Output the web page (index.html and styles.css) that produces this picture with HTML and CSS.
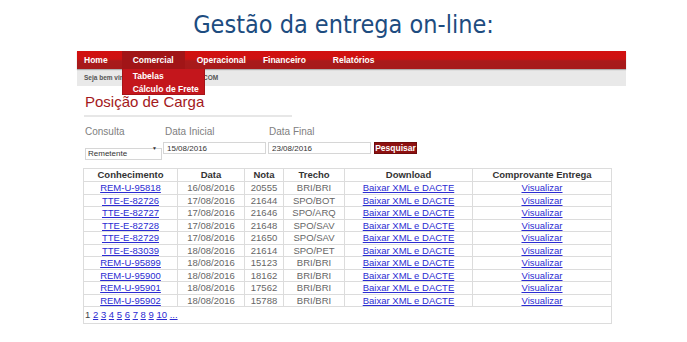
FILE: index.html
```html
<!DOCTYPE html>
<html lang="pt-BR">
<head>
<meta charset="utf-8">
<title>Gestão da entrega on-line</title>
<link rel="stylesheet" href="styles.css">
</head>
<body>
<h1 class="title">Gestão da entrega on-line:</h1>
<div class="portal">
  <nav class="menu">
    <ul class="menu-list">
      <li class="menu-item menu-first">Home</li>
      <li class="menu-item menu-active">Comercial
        <ul class="dropdown">
          <li class="dropdown-item">Tabelas</li>
          <li class="dropdown-item">Cálculo de Frete</li>
        </ul>
      </li>
      <li class="menu-item menu-op">Operacional</li>
      <li class="menu-item menu-fin">Financeiro</li>
      <li class="menu-item">Relatórios</li>
    </ul>
  </nav>
  <div class="welcome">Seja bem vindo, CLIENTE@EXEMPLO.COM</div>
  <main class="content">
    <h2 class="page-title">Posição de Carga</h2>
    <form class="search">
      <label class="lbl lbl-first">Consulta</label>
      <label class="lbl">Data Inicial</label>
      <label class="lbl lbl-last">Data Final</label>
      <span></span>
      <span class="select-wrap"><select class="field select"><option>Remetente</option></select></span>
      <input class="field date" type="text" value="15/08/2016">
      <input class="field date" type="text" value="23/08/2016">
      <button class="btn" type="button">Pesquisar</button>
    </form>
    <table class="grid">
      <colgroup>
        <col class="c1"><col class="c2"><col class="c3"><col class="c4"><col class="c5"><col class="c6">
      </colgroup>
      <thead>
        <tr><th>Conhecimento</th><th>Data</th><th>Nota</th><th>Trecho</th><th>Download</th><th>Comprovante Entrega</th></tr>
      </thead>
      <tbody>
        <tr><td><a href="#">REM-U-95818</a></td><td>16/08/2016</td><td>20555</td><td>BRI/BRI</td><td><a href="#">Baixar XML e DACTE</a></td><td><a href="#">Visualizar</a></td></tr>
        <tr><td><a href="#">TTE-E-82726</a></td><td>17/08/2016</td><td>21644</td><td>SPO/BOT</td><td><a href="#">Baixar XML e DACTE</a></td><td><a href="#">Visualizar</a></td></tr>
        <tr><td><a href="#">TTE-E-82727</a></td><td>17/08/2016</td><td>21646</td><td>SPO/ARQ</td><td><a href="#">Baixar XML e DACTE</a></td><td><a href="#">Visualizar</a></td></tr>
        <tr><td><a href="#">TTE-E-82728</a></td><td>17/08/2016</td><td>21648</td><td>SPO/SAV</td><td><a href="#">Baixar XML e DACTE</a></td><td><a href="#">Visualizar</a></td></tr>
        <tr><td><a href="#">TTE-E-82729</a></td><td>17/08/2016</td><td>21650</td><td>SPO/SAV</td><td><a href="#">Baixar XML e DACTE</a></td><td><a href="#">Visualizar</a></td></tr>
        <tr><td><a href="#">TTE-E-83039</a></td><td>18/08/2016</td><td>21614</td><td>SPO/PET</td><td><a href="#">Baixar XML e DACTE</a></td><td><a href="#">Visualizar</a></td></tr>
        <tr><td><a href="#">REM-U-95899</a></td><td>18/08/2016</td><td>15123</td><td>BRI/BRI</td><td><a href="#">Baixar XML e DACTE</a></td><td><a href="#">Visualizar</a></td></tr>
        <tr><td><a href="#">REM-U-95900</a></td><td>18/08/2016</td><td>18162</td><td>BRI/BRI</td><td><a href="#">Baixar XML e DACTE</a></td><td><a href="#">Visualizar</a></td></tr>
        <tr><td><a href="#">REM-U-95901</a></td><td>18/08/2016</td><td>17562</td><td>BRI/BRI</td><td><a href="#">Baixar XML e DACTE</a></td><td><a href="#">Visualizar</a></td></tr>
        <tr><td><a href="#">REM-U-95902</a></td><td>18/08/2016</td><td>15788</td><td>BRI/BRI</td><td><a href="#">Baixar XML e DACTE</a></td><td><a href="#">Visualizar</a></td></tr>
      </tbody>
      <tfoot>
        <tr><td colspan="6" class="pager">1 <a href="#">2</a> <a href="#">3</a> <a href="#">4</a> <a href="#">5</a> <a href="#">6</a> <a href="#">7</a> <a href="#">8</a> <a href="#">9</a> <a href="#">10</a> <a href="#">...</a></td></tr>
      </tfoot>
    </table>
  </main>
</div>
</body>
</html>
```

FILE: styles.css
```css
* { box-sizing: border-box; }
html, body { margin: 0; padding: 0; background: #fff; }
body { width: 687px; height: 342px; overflow: hidden; font-family: "Liberation Sans", Arial, sans-serif; }

.title {
  margin: 0;
  height: 51px;
  line-height: 50px;
  text-align: center;
  font-family: "DejaVu Sans", "Liberation Sans", sans-serif;
  font-stretch: condensed;
  font-weight: 400;
  font-size: 25px;
  color: #1d4c80;
}

.portal { margin-left: 77px; width: 549px; }

.menu {
  height: 18px;
  background: linear-gradient(#d3100f 0%, #cc1212 45%, #a91a1b 55%, #a61a1b 100%);
  box-shadow: 0 1px 1px rgba(0,0,0,0.25);
  position: relative;
  z-index: 2;
}
.menu-list { list-style: none; margin: 0; padding: 0; display: flex; height: 18px; }
.menu-item {
  position: relative;
  padding: 0 12px;
  line-height: 18px;
  font-size: 8.5px;
  font-weight: bold;
  color: #fff;
}
.menu-first { padding-left: 7px; padding-right: 14px; }
.menu-active { padding-left: 11px; padding-right: 11px; background: #a11517; }
.menu-op { padding-left: 12px; padding-right: 3px; }
.menu-fin { padding-left: 14px; padding-right: 15px; }

.dropdown {
  position: absolute;
  left: 0;
  top: 18px;
  width: 83px;
  list-style: none;
  margin: 0;
  padding: 1px 0 0;
  height: 26px;
  background: #c4161c;
  border: 1px solid #a51418;
  border-top: 0;
}
.dropdown-item { padding-left: 10px; line-height: 12.5px; white-space: nowrap; }

.welcome {
  height: 17px;
  line-height: 17px;
  background: #e9e9e9;
  padding-left: 7px;
  font-size: 6.5px;
  font-weight: bold;
  color: #555;
  white-space: nowrap;
}

.content { padding-left: 8px; }

.page-title {
  margin: 7px 0 0 -1px;
  width: 208px;
  padding: 0 0 4px 1px;
  border-bottom: 2px solid #e7e7e7;
  font-size: 15px;
  line-height: 18px;
  font-weight: normal;
  color: #a3191c;
}

.search {
  display: grid;
  grid-template-columns: 78px 105px 106px auto;
  grid-template-rows: 12px 12px;
  row-gap: 4px;
  margin-top: 9px;
  align-items: center;
}
.lbl { font-size: 10px; line-height: 12px; color: #808080; padding-left: 2px; }
.lbl-first { padding-left: 0; }
.lbl-last { padding-left: 1px; }

.field {
  height: 12px;
  margin: 0;
  padding: 0 0 0 3px;
  border: 1px solid #d6d6d6;
  background: #fff;
  font-family: "Liberation Sans", Arial, sans-serif;
  font-size: 8px;
  color: #333;
  border-radius: 0;
  outline: none;
}
.date { width: 103px; }
.select-wrap { position: relative; display: block; width: 77px; height: 12px; }
.select { width: 77px; appearance: none; -webkit-appearance: none; padding-left: 2px; }
.select-wrap::after {
  content: "▼";
  position: absolute;
  right: 5px;
  top: 2px;
  font-size: 5px;
  line-height: 8px;
  color: #333;
}
.btn {
  justify-self: start;
  height: 12px;
  width: 43px;
  margin: 0;
  padding: 0;
  border: 1px solid #6e0b0b;
  background: #8e1111;
  color: #fff;
  font-family: "Liberation Sans", Arial, sans-serif;
  font-size: 8.5px;
  font-weight: bold;
  line-height: 10px;
}

.grid {
  margin: 14px 0 0 -2px;
  width: 528px;
  border-collapse: collapse;
  table-layout: fixed;
  font-size: 9.5px;
  border: 1px solid #dcdcdc;
}
.c1 { width: 94px; } .c2 { width: 67px; } .c3 { width: 39px; }
.c4 { width: 61px; } .c5 { width: 128px; } .c6 { width: 139px; }
.grid th, .grid td {
  border: 1px solid #dcdcdc;
  padding: 0;
  text-align: center;
  white-space: nowrap;
}
.grid th { height: 13px; line-height: 12px; color: #333; font-weight: bold; }
.grid td { height: 12.5px; line-height: 11.5px; color: #666; }
.grid a { color: #2b2bd2; text-decoration: underline; }
.grid .pager { height: 17px; text-align: left; padding-left: 1px; color: #444; line-height: 16px; }
```
